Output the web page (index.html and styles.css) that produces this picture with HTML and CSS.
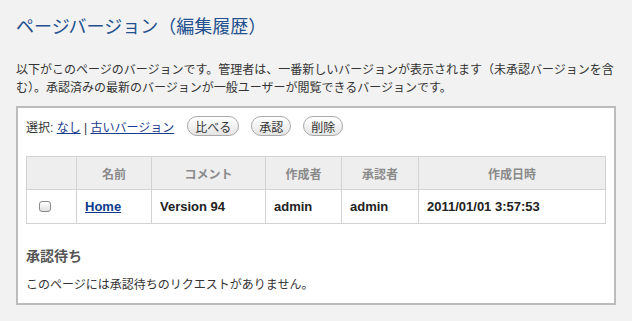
FILE: index.html
```html
<!DOCTYPE html>
<html lang="ja">
<head>
    <meta charset="UTF-8">
    <title>ページバージョン（編集履歴）</title>
    <link rel="stylesheet" href="styles.css">
</head>
<body>
    <h1 class="page-title">ページバージョン（編集履歴）</h1>
    <p class="intro">以下がこのページのバージョンです。管理者は、一番新しいバージョンが表示されます（未承認バージョンを含む）。承認済みの最新のバージョンが一般ユーザーが閲覧できるバージョンです。</p>

    <div class="versions-box">
        <div class="toolbar">
            <span class="select-label">選択: <a href="#">なし</a> | <a href="#">古いバージョン</a></span>
            <button class="pill">比べる</button>
            <button class="pill">承認</button>
            <button class="pill">削除</button>
        </div>

        <table class="versions">
            <thead>
                <tr>
                    <th class="col-check"></th>
                    <th class="col-name">名前</th>
                    <th class="col-comment">コメント</th>
                    <th class="col-author">作成者</th>
                    <th class="col-approver">承認者</th>
                    <th>作成日時</th>
                </tr>
            </thead>
            <tbody>
                <tr>
                    <td class="col-check"><input type="checkbox"></td>
                    <td><a href="#">Home</a></td>
                    <td>Version 94</td>
                    <td>admin</td>
                    <td>admin</td>
                    <td>2011/01/01 3:57:53</td>
                </tr>
            </tbody>
        </table>

        <h3 class="pending-title">承認待ち</h3>
        <p class="pending-text">このページには承認待ちのリクエストがありません。</p>
    </div>
</body>
</html>
```

FILE: styles.css
```css
body {
    margin: 0;
    padding: 0 16px;
    background-color: #f2f2f2;
    color: #333;
    font-family: "Liberation Sans", "Noto Sans CJK JP", sans-serif;
    font-size: 12px;
}
a {
    color: #1a3c8c;
}
.page-title {
    margin: 0;
    padding-top: 13px;
    font-size: 18px;
    font-weight: normal;
    line-height: 28px;
    color: #23508f;
}
.intro {
    margin: 20px 0 0;
    line-height: 18px;
}
.versions-box {
    margin-top: 9px;
    background: white;
    border: 2px solid #bcbcbc;
    padding: 8px 8px 9px;
}
.toolbar {
    display: flex;
    align-items: center;
    height: 20px;
}
.select-label {
    margin-right: 13px;
}
.pill {
    height: 20px;
    margin-right: 12px;
    padding: 0 7px;
    border: 1px solid #a9a9a9;
    border-radius: 10px;
    background: linear-gradient(#ffffff, #e4e4e4);
    font-family: inherit;
    font-size: 12px;
    color: #333;
}
.versions {
    width: 100%;
    margin-top: 20px;
    border-collapse: collapse;
    table-layout: fixed;
}
.versions th, .versions td {
    box-sizing: border-box;
    border: 1px solid #d2d2d2;
    padding: 0 8px;
    text-align: left;
}
.versions th {
    height: 33px;
    background: #eeeeee;
    color: #8a8a8a;
    text-align: center;
    font-weight: bold;
}
.versions td {
    height: 34px;
    font-size: 13px;
    font-weight: bold;
    color: #222;
}
.versions td a {
    color: #0d3a8c;
}
.col-check { width: 50px; }
.col-name { width: 75px; }
.col-comment { width: 114px; }
.col-author { width: 76px; }
.col-approver { width: 77px; }
.versions td.col-check {
    padding-left: 12px;
}
.versions input[type="checkbox"] {
    appearance: none;
    display: block;
    width: 12px;
    height: 11px;
    margin: 0;
    border: 1px solid #8c8c8c;
    border-radius: 3px;
    background: linear-gradient(#ffffff, #e0e0e0);
}
.pending-title {
    margin: 22px 0 0;
    font-size: 14px;
    line-height: 20px;
    color: #555;
}
.pending-text {
    margin: 10px 0 0;
    line-height: 18px;
}
```
